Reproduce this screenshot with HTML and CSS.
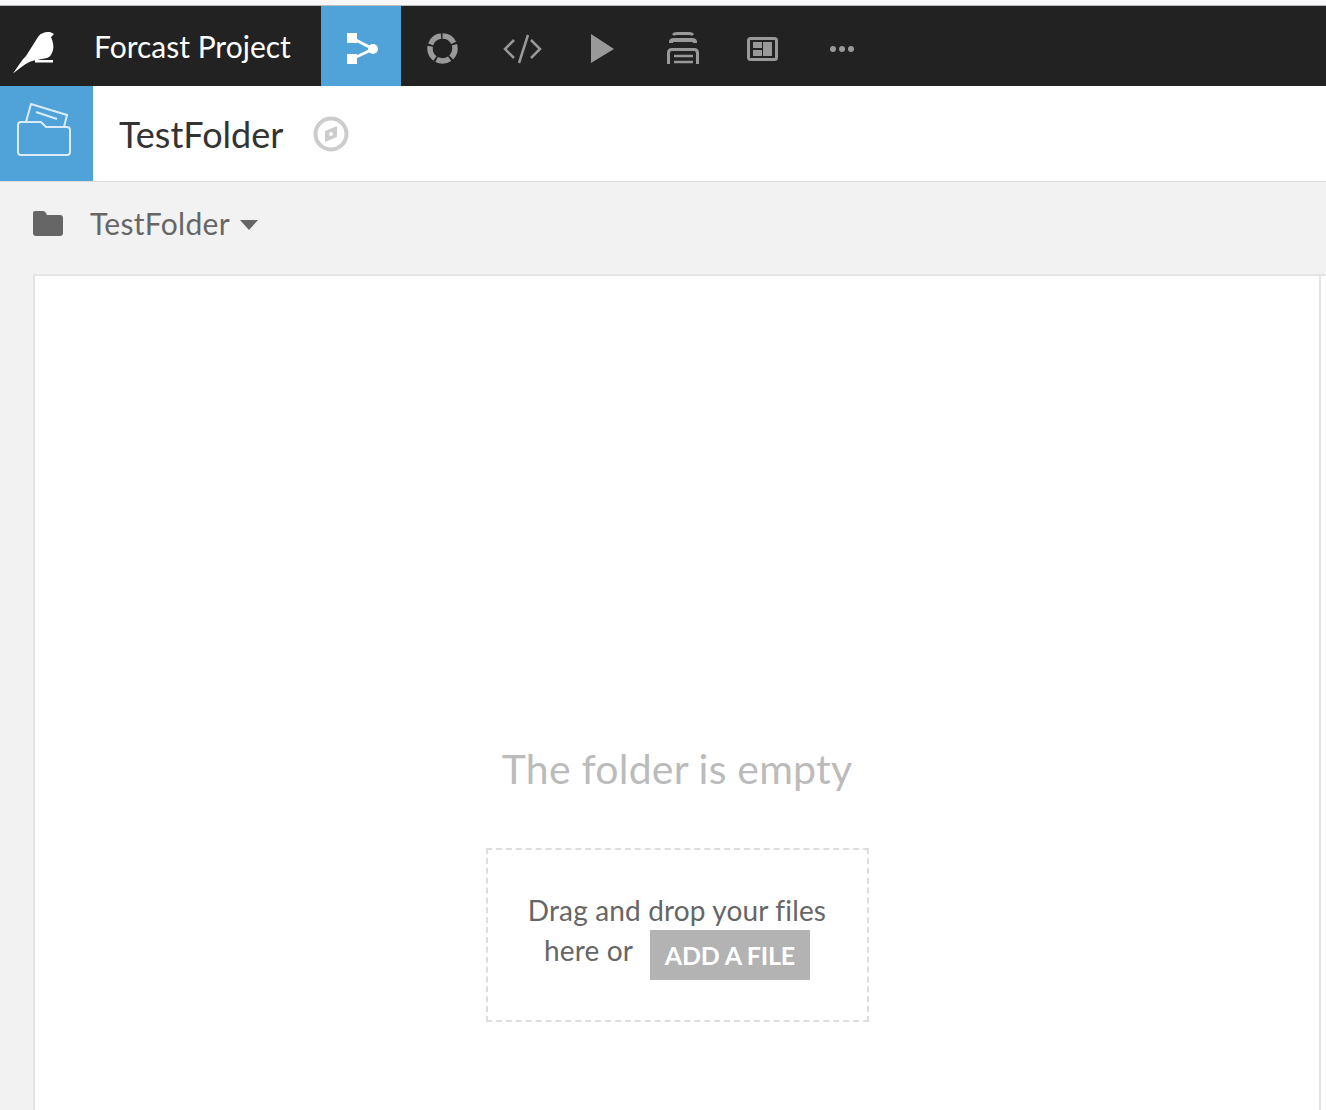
FILE: index.html
```html
<!DOCTYPE html>
<html>
<head>
  <title>TestFolder</title>
  <link rel="stylesheet" href="styles.css">
</head>
<body>
  <div class="topstrip"></div>
  <nav class="navbar">
    <div class="brand">
      <svg class="bird" width="76" height="80" viewBox="0 0 76 80">
        <path d="M13 67.500 C18 60 22 54 26 50 C30 44 34 37 38 31 C40 28 43 26 50 26 L54 28 L51 31 C53 36 54 40 53 44 C52 48 50 51 47 52 L37 54 C32 54 26 57 13 67.500Z" fill="#fff"/>
        <rect x="35" y="54" width="18" height="2.500" fill="#fff"/>
      </svg>
      <span class="project">Forcast Project</span>
    </div>
    <a class="tab active">
      <svg width="80" height="80" viewBox="0 0 80 80">
        <path d="M31 32 L52 43 L31 53" fill="none" stroke="#fff" stroke-width="3"/>
        <rect x="26" y="27" width="10" height="10" fill="#fff"/>
        <rect x="26" y="48" width="10" height="10" fill="#fff"/>
        <circle cx="52" cy="43" r="5" fill="#fff"/>
      </svg>
    </a>
    <a class="tab">
      <svg width="80" height="80" viewBox="0 0 80 80">
        <circle cx="41.500" cy="42.500" r="12.500" fill="none" stroke="#999" stroke-width="5.500" stroke-dasharray="13.700 2" transform="rotate(-90 41.500 42.500)"/>
      </svg>
    </a>
    <a class="tab">
      <svg width="80" height="80" viewBox="0 0 80 80" fill="none" stroke="#999" stroke-width="2.500">
        <path d="M33 34 L24 43 L33 52"/>
        <path d="M47 29 L38 57"/>
        <path d="M50 34 L59 43 L50 52"/>
      </svg>
    </a>
    <a class="tab">
      <svg width="80" height="80" viewBox="0 0 80 80">
        <path d="M30 28 L53 43 L30 57Z" fill="#999"/>
      </svg>
    </a>
    <a class="tab">
      <svg width="80" height="80" viewBox="0 0 80 80" fill="none" stroke="#999">
        <path d="M32 29 Q33 27.500 36 27.500 H48 Q51 27.500 52 29" stroke-width="3"/>
        <path d="M30 37 V36 Q30 34 33 34 H51 Q54 34 54 36 V37" stroke-width="4"/>
        <path d="M27.500 58 V47 Q27.500 43.500 31 43.500 H53 Q56.500 43.500 56.500 47 V58" stroke-width="3"/>
        <path d="M33 50 H52 M33 56 H52" stroke-width="2.500"/>
      </svg>
    </a>
    <a class="tab">
      <svg width="80" height="80" viewBox="0 0 80 80">
        <rect x="27.500" y="32.500" width="28" height="21" rx="2" fill="none" stroke="#999" stroke-width="3"/>
        <rect x="32" y="36" width="9" height="6" fill="#999"/>
        <rect x="32" y="44" width="9" height="6" fill="#999"/>
        <rect x="42" y="36" width="9" height="14" fill="#999"/>
      </svg>
    </a>
    <a class="tab">
      <svg width="80" height="80" viewBox="0 0 80 80">
        <circle cx="32" cy="43" r="3" fill="#999"/>
        <circle cx="41" cy="43" r="3" fill="#999"/>
        <circle cx="50" cy="43" r="3" fill="#999"/>
      </svg>
    </a>
  </nav>

  <header class="subheader">
    <div class="folder-block">
      <svg width="93" height="95" viewBox="0 0 93 95" fill="none" stroke="#d9ecf8" stroke-width="2">
        <path d="M26 36 L31 18 L67 29 L64 41"/>
        <path d="M36 26 L57 33"/>
        <path d="M21 36 H41 L46 41 H67 Q70 41 70 44 V66 Q70 69 67 69 H21 Q18 69 18 66 V39 Q18 36 21 36Z"/>
      </svg>
    </div>
    <h1 class="title">TestFolder</h1>
    <svg class="compass" width="36" height="36" viewBox="0 0 36 36">
      <circle cx="18" cy="18" r="15.500" fill="none" stroke="#ccc" stroke-width="4"/>
      <path d="M24 10 V21 L12 26 V15Z" fill="#ccc"/>
      <circle cx="18" cy="18" r="2" fill="#fff"/>
    </svg>
  </header>

  <div class="crumbs">
    <svg width="32" height="26" viewBox="0 0 32 26">
      <path d="M3 1 H11 Q13 1 14 3 L15 5 H28 Q31 5 31 8 V23 Q31 26 28 26 H4 Q1 26 1 23 V3 Q1 1 3 1Z" fill="#666"/>
    </svg>
    <span class="crumb-name">TestFolder</span>
    <span class="caret"></span>
  </div>

  <div class="content">
    <div class="gutter"></div>
    <main class="panel">
      <h2 class="empty">The folder is empty</h2>
      <div class="dropzone">
        <p>Drag and drop your files<br>here or <button class="add-btn">ADD A FILE</button></p>
      </div>
    </main>
    <div class="filler"></div>
  </div>
</body>
</html>
```

FILE: styles.css
```css
* { box-sizing: border-box; }
html, body { height: 1110px; overflow: hidden; }
body {
  margin: 0;
  background: #fff;
  font-family: 'Lato', 'Noto Sans', sans-serif;
  color: #333;
}
.topstrip { height: 6px; background: #f8f8fb; border-bottom: 1px solid #bbb; }

.navbar { display: flex; height: 80px; background: #222; }
.brand { display: flex; align-items: center; width: 321px; }
.bird { flex: none; }
.project { margin-left: 18px; color: #fff; font-size: 30px; }
.tab { display: block; width: 80px; height: 80px; }
.tab svg { display: block; }
.tab.active { background: #4fa3d9; }

.subheader {
  display: flex; align-items: center;
  height: 96px; background: #fff;
  border-bottom: 1px solid #ddd;
}
.folder-block { width: 93px; height: 95px; background: #4fa3d9; }
.folder-block svg { display: block; }
.title { margin: 0 0 0 26px; font-size: 36px; font-weight: 400; }
.compass { margin: 0 0 0 30px; }

.crumbs {
  display: flex; align-items: center;
  height: 92px; padding: 0 0 10px 32px;
  background: #f2f2f2;
}
.crumb-name { margin-left: 26px; color: #666; font-size: 30px; letter-spacing: 0.3px; }
.caret {
  margin: 4px 0 0 10px;
  border-left: 9px solid transparent;
  border-right: 9px solid transparent;
  border-top: 10px solid #666;
}

.content { display: flex; height: 836px; }
.gutter { width: 33px; background: #f2f2f2; }
.panel {
  display: flex; flex-direction: column; align-items: center;
  width: 1288px; padding-top: 465px;
  background: #fff;
  border: 2px solid #e4e4e4;
  border-bottom: none;
}
.filler { flex: 1; border-top: 2px solid #e4e4e4; }
.empty { margin: 0; color: #bbb; font-size: 41px; line-height: 56px; font-weight: 400; letter-spacing: 0.2px; }
.dropzone {
  display: flex; align-items: center; justify-content: center;
  width: 383px; height: 174px; margin-top: 51px;
  border: 2px dashed #ddd;
}
.dropzone p { margin: 0; text-align: center; color: #666; font-size: 28px; line-height: 40px; letter-spacing: 0.15px; }
.add-btn {
  display: inline-block; width: 160px; height: 50px; margin-left: 10px; padding: 0;
  vertical-align: -4px;
  background: #b3b3b3; color: #fff;
  border: none; font: 700 25px 'Lato', sans-serif; letter-spacing: -0.2px;
}
```
